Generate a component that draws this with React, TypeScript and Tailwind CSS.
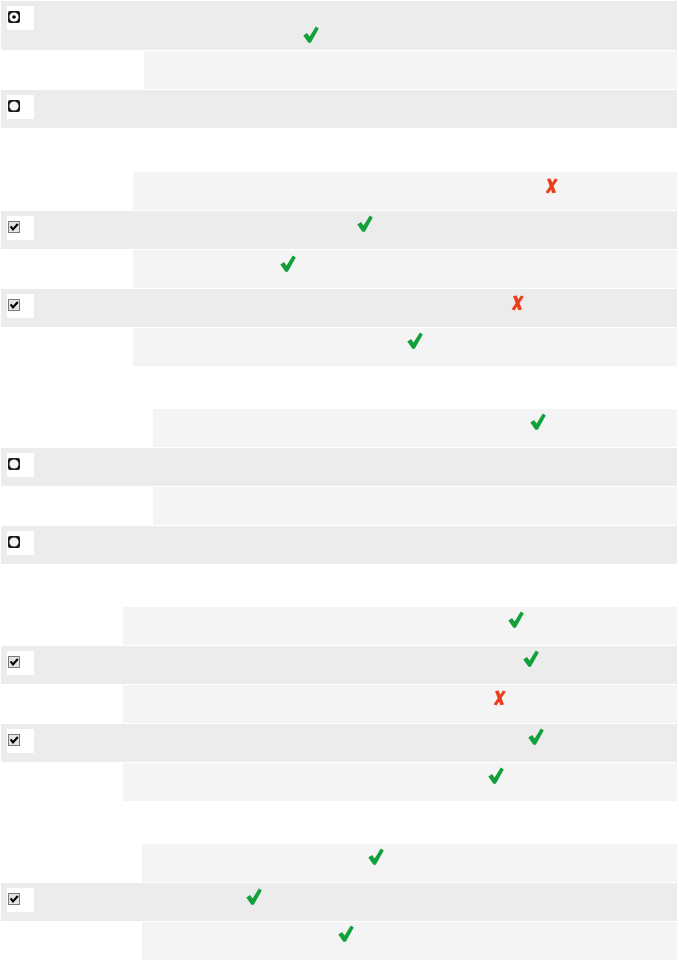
type Mark = 'ok' | 'bad' | null;
type Input = 'radio-on' | 'radio' | 'check' | null;

interface Row {
  kind: 'dark' | 'light';
  input?: Input;
  mark?: Mark;
  markPos?: string;
  height?: string;
}

interface Group {
  spacer: string;
  top: string;
  rows: Row[];
}

const GROUPS: Group[] = [
  {
    spacer: 'w-[143px]',
    top: 'mt-0',
    rows: [
      { kind: 'dark', input: 'radio-on', mark: 'ok', markPos: 'ml-[159px] mt-[25px]', height: 'h-[49px]' },
      { kind: 'light' },
      { kind: 'dark', input: 'radio' },
    ],
  },
  {
    spacer: 'w-[132px]',
    top: 'mt-[44px]',
    rows: [
      { kind: 'light', mark: 'bad', markPos: 'ml-[412px] mt-[6px]' },
      { kind: 'dark', input: 'check', mark: 'ok', markPos: 'ml-[224px] mt-[4px]' },
      { kind: 'light', mark: 'ok', markPos: 'ml-[147px] mt-[5px]' },
      { kind: 'dark', input: 'check', mark: 'bad', markPos: 'ml-[378px] mt-[6px]' },
      { kind: 'light', mark: 'ok', markPos: 'ml-[274px] mt-[4px]' },
    ],
  },
  {
    spacer: 'w-[152px]',
    top: 'mt-[43px]',
    rows: [
      { kind: 'light', mark: 'ok', markPos: 'ml-[377px] mt-[4px]' },
      { kind: 'dark', input: 'radio' },
      { kind: 'light' },
      { kind: 'dark', input: 'radio' },
    ],
  },
  {
    spacer: 'w-[122px]',
    top: 'mt-[43px]',
    rows: [
      { kind: 'light', mark: 'ok', markPos: 'ml-[385px] mt-[4px]' },
      { kind: 'dark', input: 'check', mark: 'ok', markPos: 'ml-[400px] mt-[4px]' },
      { kind: 'light', mark: 'bad', markPos: 'ml-[370px] mt-[5px]' },
      { kind: 'dark', input: 'check', mark: 'ok', markPos: 'ml-[405px] mt-[4px]' },
      { kind: 'light', mark: 'ok', markPos: 'ml-[365px] mt-[4px]' },
    ],
  },
  {
    spacer: 'w-[141px]',
    top: 'mt-[43px]',
    rows: [
      { kind: 'light', mark: 'ok', markPos: 'ml-[226px] mt-[4px]' },
      { kind: 'dark', input: 'check', mark: 'ok', markPos: 'ml-[104px] mt-[5px]' },
      { kind: 'light', mark: 'ok', markPos: 'ml-[196px] mt-[3px]' },
    ],
  },
];

// heavy green tick, like the old ✔ gif
function CheckMark() {
  return (
    <svg width="16" height="17" viewBox="0 0 16 17" className="block">
      <path d="M0.3 9.6 L4 7 L6.6 10.4 L12.8 0.4 L15.8 2.4 L7.8 16.7 L5.4 16.7 Z" fill="#12a03a" />
    </svg>
  );
}

function CrossMark() {
  return (
    <svg width="13" height="16" viewBox="0 0 13 16" className="block">
      <path d="M2 1 L5.6 0.6 L11 14.6 L7.4 15.2 Z" fill="#ec3d1a" />
      <path d="M10 0.4 L12.8 1.8 L3.4 15.6 L0.6 14.2 Z" fill="#ec3d1a" />
    </svg>
  );
}

function InputIcon({ type }: { type: Input }) {
  if (type === 'check') {
    return (
      <svg width="12" height="12" viewBox="0 0 12 12" className="block">
        <rect x="0.5" y="0.5" width="11" height="11" fill="#e4e4e4" stroke="#7a7a7a" />
        <path d="M2.6 5.4 L5 8.4 L9.8 3" fill="none" stroke="#000" strokeWidth="2.2" />
      </svg>
    );
  }
  return (
    <svg width="12" height="12" viewBox="0 0 12 12" className="block">
      <rect x="0" y="0" width="12" height="12" rx="2" fill="#1c1c1c" />
      <circle cx="6" cy="6" r="4.6" fill={type === 'radio-on' ? '#ffffff' : '#f4f4f4'} />
      {type === 'radio-on' && <circle cx="6" cy="6" r="1.8" fill="#000" />}
    </svg>
  );
}

function AnswerRow({ row, spacer }: { row: Row; spacer: string }) {
  const height = row.height ?? 'h-[38px]';
  const mark = row.mark ? (
    <div className={row.markPos}>{row.mark === 'ok' ? <CheckMark /> : <CrossMark />}</div>
  ) : null;

  if (row.kind === 'dark') {
    return (
      <div className={`flex ${height} bg-[#ececec]`}>
        <div className={`${spacer} shrink-0 pl-[6px] pt-[5px]`}>
          <div className="w-[27px] h-[24px] bg-white pl-[1px] pt-[5px]">
            <InputIcon type={row.input ?? null} />
          </div>
        </div>
        <div className="flex-1 flex items-start">{mark}</div>
      </div>
    );
  }

  return (
    <div className={`flex ${height}`}>
      <div className={`${spacer} shrink-0 bg-white`} />
      <div className="flex-1 flex items-start bg-[#f4f4f4]">{mark}</div>
    </div>
  );
}

export default function App() {
  return (
    <div className="w-full min-h-[961px] bg-white pl-[1px] pr-[2px] pt-[1px] font-['Liberation_Sans',sans-serif]">
      {GROUPS.map((g, i) => (
        <div key={i} className={`${g.top} flex flex-col gap-[1px]`}>
          {g.rows.map((r, j) => (
            <AnswerRow key={j} row={r} spacer={g.spacer} />
          ))}
        </div>
      ))}
    </div>
  );
}
